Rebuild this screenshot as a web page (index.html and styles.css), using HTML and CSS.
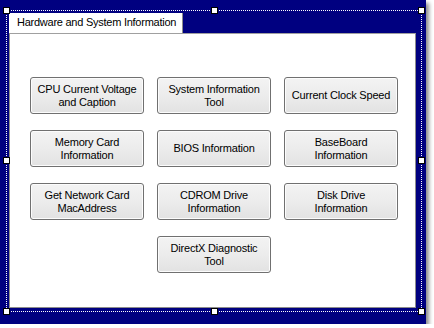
FILE: index.html
```html
<!DOCTYPE html>
<html lang="en">
<head>
    <meta charset="UTF-8">
    <meta name="viewport" content="width=device-width, initial-scale=1.0">
    <title>Hardware and System Information</title>
    <link rel="stylesheet" href="styles.css">
</head>
<body>
    <div class="frame">
        <div class="tabs">
            <div class="tab-strip">
                <div class="tab active">Hardware and System Information</div>
            </div>
            <div class="tab-page">
                <div class="buttons">
                    <button class="btn">CPU Current Voltage<br>and Caption</button>
                    <button class="btn">System Information<br>Tool</button>
                    <button class="btn">Current Clock Speed</button>
                    <button class="btn">Memory Card<br>Information</button>
                    <button class="btn">BIOS Information</button>
                    <button class="btn">BaseBoard<br>Information</button>
                    <button class="btn">Get Network Card<br>MacAddress</button>
                    <button class="btn">CDROM Drive<br>Information</button>
                    <button class="btn">Disk Drive<br>Information</button>
                    <button class="btn center">DirectX Diagnostic<br>Tool</button>
                </div>
            </div>
        </div>

        <!-- designer selection -->
        <div class="selection">
            <span class="grip tl"></span>
            <span class="grip tc"></span>
            <span class="grip tr"></span>
            <span class="grip ml"></span>
            <span class="grip mr"></span>
            <span class="grip bl"></span>
            <span class="grip bc"></span>
            <span class="grip br"></span>
        </div>
    </div>
</body>
</html>
```

FILE: styles.css
```css
body, html {
    margin: 0;
    padding: 0;
    background-color: #fff;
    font-family: 'Liberation Sans', Arial, sans-serif;
    font-size: 11px;
    color: #000;
}
.frame {
    position: relative;
    width: 426px;
    height: 324px;
    background-color: #000080;
    box-shadow: 3px 3px 4px rgba(0, 0, 0, 0.45);
}
.tabs {
    padding: 13px 10px 0 9px;
}
.tab-strip {
    display: flex;
    height: 20px;
}
.tab {
    background-color: #fff;
    border-right: 1px solid #8c8c8c;
    padding: 3px 0 0 8px;
    width: 165px;
    white-space: nowrap;
    letter-spacing: -0.25px;
    overflow: hidden;
}
.tab-page {
    height: 273px;
    background-color: #fff;
    border: 1px solid #8c8c8c;
    border-top-color: #a0a0a0;
}
.buttons {
    display: grid;
    grid-template-columns: repeat(3, 114px);
    grid-auto-rows: 37px;
    column-gap: 13px;
    row-gap: 16px;
    padding: 43px 0 0 20px;
}
.btn {
    font-family: 'Liberation Sans', Arial, sans-serif;
    font-size: 11px;
    line-height: 13px;
    letter-spacing: -0.2px;
    color: #000;
    border: 1px solid #707070;
    border-radius: 3px;
    background: linear-gradient(#f3f3f3 0%, #ececec 50%, #e2e2e2 100%);
    box-shadow: inset 0 0 0 1px #fcfcfc;
    padding: 0;
    text-align: center;
}
.btn.center {
    grid-column: 2;
}
.selection {
    position: absolute;
    left: 6px;
    top: 10px;
    width: 416px;
    height: 302px;
    border: 1px dotted #fff;
    box-sizing: border-box;
}
.grip {
    position: absolute;
    width: 5px;
    height: 5px;
    background-color: #fff;
    border: 1px solid #000;
}
.tl { left: -4px; top: -4px; }
.tc { left: 204px; top: -4px; }
.tr { right: -4px; top: -4px; }
.ml { left: -4px; top: 146px; }
.mr { right: -4px; top: 146px; }
.bl { left: -4px; bottom: -4px; }
.bc { left: 204px; bottom: -4px; }
.br { right: -4px; bottom: -4px; }
```
